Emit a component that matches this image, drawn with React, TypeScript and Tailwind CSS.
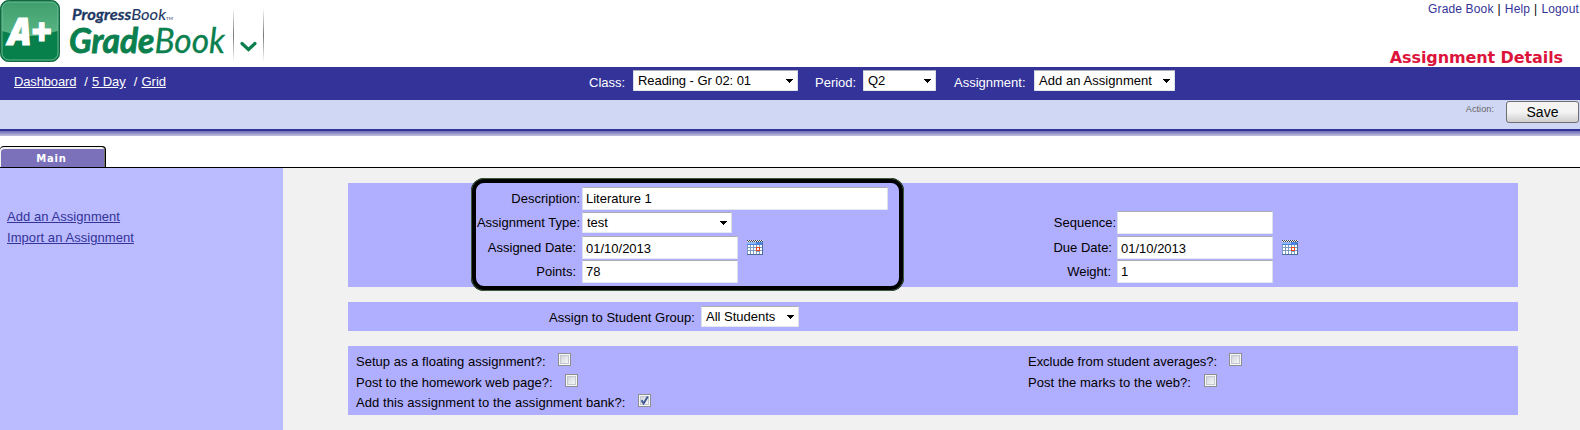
import type { ReactNode } from 'react';

function Arrow() {
  return (
    <svg width="7" height="4" viewBox="0 0 7 4" shapeRendering="crispEdges" className="shrink-0">
      <path d="M0 0h7v1h-1v1h-1v1h-1v1h-1v-1h-1v-1h-1v-1h-1z" fill="#000" />
    </svg>
  );
}

function Select({ className, children }: { className: string; children: ReactNode }) {
  return (
    <div
      className={`flex h-[21px] shrink-0 items-center justify-between rounded-[1px] border border-t-[#abadb3] border-x-[#dbdfe6] border-b-[#e3e9ef] bg-white pr-[4px] pl-[4px] leading-[19px] text-black ${className}`}
    >
      <span>{children}</span>
      <Arrow />
    </div>
  );
}

function Field({ className, children }: { className: string; children?: ReactNode }) {
  return (
    <div
      className={`h-[23px] shrink-0 rounded-[1px] border border-t-[#abadb3] border-x-[#dbdfe6] border-b-[#e3e9ef] bg-white pl-[3px] text-black ${className}`}
    >
      {children}
    </div>
  );
}

function Calendar() {
  return (
    <svg width="16" height="15" viewBox="0 0 16 15" shapeRendering="crispEdges" className="shrink-0">
      <rect x="0" y="0" width="16" height="15" fill="#7d9cc6" />
      <rect x="0" y="0" width="16" height="2" fill="#e6ebf7" />
      <path d="M0 .5h16M1 1.5h15" stroke="#444" strokeDasharray="1 1" />
      <rect x="0" y="2" width="16" height="3" fill="#4a84e0" />
      <rect x="0" y="2" width="9" height="2" fill="#8fb6f2" />
      <g fill="#fff">
        <path d="M1 5h2v2h-2zM4 5h2v2h-2zM7 5h2v2h-2zM10 5h2v2h-2zM13 5h2v2h-2z" />
        <path d="M1 8h2v2h-2zM4 8h2v2h-2zM7 8h2v2h-2zM13 8h2v2h-2z" />
        <path d="M1 11h2v3h-2zM4 11h2v3h-2zM7 11h2v3h-2zM10 12h2v2h-2zM13 11h2v3h-2z" />
      </g>
      <path d="M9 7h4v4h-4z" fill="#e8481c" />
      <path d="M10 8h2v2h-2z" fill="#fff" />
      <path d="M15.5 3v12M0 14.5h16" stroke="#4a6e9c" />
    </svg>
  );
}

function Check({ checked }: { checked?: boolean }) {
  return (
    <svg width="13" height="13" viewBox="0 0 13 13" className="shrink-0">
      <defs>
        <linearGradient id="box" x1="0" y1="0" x2="1" y2="1">
          <stop offset="0" stopColor="#cfd3da" />
          <stop offset="1" stopColor="#f8f8f8" />
        </linearGradient>
      </defs>
      <rect x=".5" y=".5" width="12" height="12" fill="#f7f7f7" stroke="#8e8f8f" />
      <rect x="2.5" y="2.5" width="8" height="8" fill="url(#box)" stroke="#c3c8d0" />
      {checked && <path d="M3.6 6.2l2 3.2L9.8 2.4" fill="none" stroke="#3d5796" strokeWidth="1.9" />}
    </svg>
  );
}

function CheckRow({ label, checked, className, labelClass }: { label: string; checked?: boolean; className: string; labelClass: string }) {
  return (
    <div className={`flex items-start ${className}`}>
      <span className={`pt-px leading-[16px] whitespace-nowrap ${labelClass}`}>{label}</span>
      <Check checked={checked} />
    </div>
  );
}

function Logo() {
  return (
    <svg width="266" height="63" viewBox="0 0 266 63" fontFamily="Lato, sans-serif" fontStyle="italic">
      <defs>
        <linearGradient id="rule" x1="0" y1="0" x2="0" y2="1">
          <stop offset="0" stopColor="#fff" />
          <stop offset=".5" stopColor="#777" />
          <stop offset="1" stopColor="#fff" />
        </linearGradient>
        <linearGradient id="gloss" x1="0" y1="0" x2="0" y2="1">
          <stop offset="0" stopColor="#3f9f6c" />
          <stop offset="1" stopColor="#5ab485" />
        </linearGradient>
      </defs>
      <rect x=".5" y=".5" width="59" height="61" rx="8" fill="#07804b" stroke="#17663f" />
      <path d="M2 31V9a7 7 0 0 1 7-7h42a7 7 0 0 1 7 7v22C46 34 40 36 30 36S12 34 2 31z" fill="url(#gloss)" />
      <rect x="2" y="2" width="56" height="58" rx="7" fill="none" stroke="#8fcbab" strokeOpacity=".7" />
      <g fontFamily="'Open Sans', sans-serif" fontWeight="800" fill="#fff" stroke="#fff" strokeWidth="1.2">
        <text x="8" y="44.5" fontSize="37" textLength="44" lengthAdjust="spacingAndGlyphs">A+</text>
      </g>
      <text x="72" y="20" fontSize="16" fill="#1d3763" stroke="#1d3763" strokeWidth=".1" textLength="94" lengthAdjust="spacingAndGlyphs">
        <tspan fontWeight="700" strokeWidth=".3">Progress</tspan>Book
      </text>
      <text x="166" y="20" fontSize="4.5" fontStyle="normal" fill="#1d3763">TM</text>
      <text x="69" y="53" fontSize="35" fill="#0b7f4e" stroke="#0b7f4e" strokeWidth=".3" textLength="156" lengthAdjust="spacingAndGlyphs">
        <tspan fontWeight="700" strokeWidth=".9">Grade</tspan>Book
      </text>
      <rect x="233" y="8" width="1" height="54" fill="url(#rule)" />
      <rect x="263" y="8" width="1" height="54" fill="url(#rule)" />
      <path d="M242 43.5l6.5 6 6.5-6" fill="none" stroke="#0b7f4e" strokeWidth="3.2" strokeLinecap="round" />
    </svg>
  );
}

export default function App() {
  return (
    <div className="flex h-[430px] w-[1580px] flex-col overflow-hidden bg-white font-['Liberation_Sans',Arial,sans-serif] text-[13px] text-black">
      <header className="flex h-[67px] shrink-0 justify-between">
        <Logo />
        <div className="flex flex-col items-end justify-between">
          <div className="flex gap-[4px] pr-px text-[12px] leading-[18px] tracking-[0.15px] text-[#333399]">
            <a>Grade Book</a>
            <span className="text-black">|</span>
            <a>Help</a>
            <span className="text-black">|</span>
            <a>Logout</a>
          </div>
          <h1 className="mr-[17px] h-[19px] font-['DejaVu_Sans',sans-serif] text-[16px] leading-[20px] font-bold tracking-[-0.1px] text-[#dc143c]">Assignment Details</h1>
        </div>
      </header>

      <nav className="flex h-[33px] shrink-0 items-start bg-[#333399] pt-[3px] text-white">
        <div className="flex w-[575px] pt-[4px] pl-[14px] leading-[16px]">
          <a className="tracking-[-0.15px] underline">Dashboard</a>
          <span className="mr-[4px] ml-[8px]">/</span>
          <a className="underline">5 Day</a>
          <span className="mr-[4px] ml-[8px]">/</span>
          <a className="underline">Grid</a>
        </div>
        <span className="w-[58px] pt-[5px] pl-[14px] leading-[16px]">Class:</span>
        <Select className="w-[165px] tracking-[-0.06px]">Reading - Gr 02: 01</Select>
        <span className="w-[65px] pt-[5px] pl-[17px] leading-[16px]">Period:</span>
        <Select className="w-[73px]">Q2</Select>
        <span className="w-[98px] pt-[5px] pl-[18px] leading-[16px]">Assignment:</span>
        <Select className="w-[141px] tracking-[0.06px]">Add an Assignment</Select>
      </nav>

      <div className="flex h-[29px] shrink-0 justify-end bg-[#d0d7f4] pt-[1px] pr-px">
        <span className="mr-[12px] pt-[2px] text-[9px] leading-[12px] tracking-[0.1px] text-[#666]">Action:</span>
        <button className="h-[22px] w-[73px] rounded-[3px] border border-[#707070] bg-linear-to-b from-[#f4f4f4] from-50% to-[#cfcfcf] to-100% pt-px text-[14px] leading-[19px]">Save</button>
      </div>
      <div className="h-[2px] shrink-0 bg-[#333399]" />
      <div className="h-[5px] shrink-0 bg-linear-to-b from-[#6f6cb5] to-[#c3c1dd]" />

      <div className="flex h-[32px] shrink-0 items-end border-b border-black">
        <div className="h-[21px] w-[106px] rounded-t-[4px] border-t border-r border-black bg-[#7b70ba] shadow-[inset_-1px_0_0_#77756a,inset_1px_2px_0_#f3f3f0]">
          <div className="pt-[4px] pr-[2px] text-center font-['DejaVu_Sans',sans-serif] text-[10px] leading-[15px] font-bold tracking-[0.8px] text-white">Main</div>
        </div>
      </div>

      <div className="flex min-h-0 grow bg-[#f1f1f1]">
        <aside className="flex w-[283px] shrink-0 flex-col items-start bg-[#bbbbff] pt-[41px] pl-[7px] leading-[16px] tracking-[0.06px] text-[#333399]">
          <a className="mb-[5px] underline">Add an Assignment</a>
          <a className="underline">Import an Assignment</a>
        </aside>

        <main className="ml-[65px] flex w-[1170px] shrink-0 flex-col gap-[15px] pt-[15px]">
          <section className="relative flex h-[104px] bg-[#b0aeff] pt-[4px]">
            <div className="flex w-[670px] flex-col">
              <div className="flex h-[25px] items-start">
                <span className="w-[232px] pt-[4px] text-right leading-[16px]">Description:</span>
                <Field className="ml-[2px] w-[306px] leading-[21px]">Literature 1</Field>
              </div>
              <div className="flex h-[24px] items-start">
                <span className="w-[232px] pt-[3px] text-right leading-[16px]">Assignment Type:</span>
                <Select className="ml-[2px] w-[150px]">test</Select>
              </div>
              <div className="flex h-[24px] items-start">
                <span className="w-[228px] pt-[4px] text-right leading-[16px]">Assigned Date:</span>
                <Field className="ml-[6px] w-[156px] leading-[23px]">01/10/2013</Field>
                <span className="mt-[4px] ml-[9px]"><Calendar /></span>
              </div>
              <div className="flex h-[24px] items-start">
                <span className="w-[228px] pt-[4px] text-right leading-[16px]">Points:</span>
                <Field className="ml-[6px] w-[156px] leading-[22px]">78</Field>
              </div>
            </div>
            <div className="flex flex-col pt-[24px]">
              <div className="flex h-[25px] items-start">
                <span className="w-[98px] pt-[4px] text-right leading-[16px]">Sequence:</span>
                <Field className="ml-[1px] w-[156px]" />
              </div>
              <div className="flex h-[24px] items-start">
                <span className="w-[94px] pt-[4px] text-right leading-[16px]">Due Date:</span>
                <Field className="ml-[5px] w-[156px] leading-[23px]">01/10/2013</Field>
                <span className="mt-[4px] ml-[9px]"><Calendar /></span>
              </div>
              <div className="flex h-[24px] items-start">
                <span className="w-[93px] pt-[4px] text-right leading-[16px]">Weight:</span>
                <Field className="ml-[6px] w-[156px] leading-[22px]">1</Field>
              </div>
            </div>
            <div className="absolute top-[-5px] left-[123px] h-[113px] w-[433px] rounded-[13px] border-[5px] border-black outline-1 -outline-offset-1 outline-[#3c5a3c]" />
          </section>

          <section className="flex h-[29px] shrink-0 bg-[#b0aeff] pt-[4px]">
            <span className="w-[353px] pt-[4px] pl-[201px] leading-[16px] tracking-[0.03px] whitespace-nowrap">Assign to Student Group:</span>
            <Select className="w-[98px] leading-[21px]">All Students</Select>
          </section>

          <section className="flex h-[69px] shrink-0 bg-[#b0aeff] pt-[7px]">
            <div className="w-[672px] pl-[8px]">
              <CheckRow className="h-[21px]" labelClass="w-[202px] tracking-[0.03px]" label="Setup as a floating assignment?:" />
              <CheckRow className="h-[20px]" labelClass="w-[209px]" label="Post to the homework web page?:" />
              <CheckRow className="h-[20px]" labelClass="w-[282px] tracking-[0.08px]" label="Add this assignment to the assignment bank?:" checked />
            </div>
            <div className="pl-[8px]">
              <CheckRow className="h-[21px]" labelClass="w-[201px] tracking-[-0.03px]" label="Exclude from student averages?:" />
              <CheckRow className="h-[20px]" labelClass="w-[176px] tracking-[0.07px]" label="Post the marks to the web?:" />
            </div>
          </section>
        </main>
      </div>
    </div>
  );
}
